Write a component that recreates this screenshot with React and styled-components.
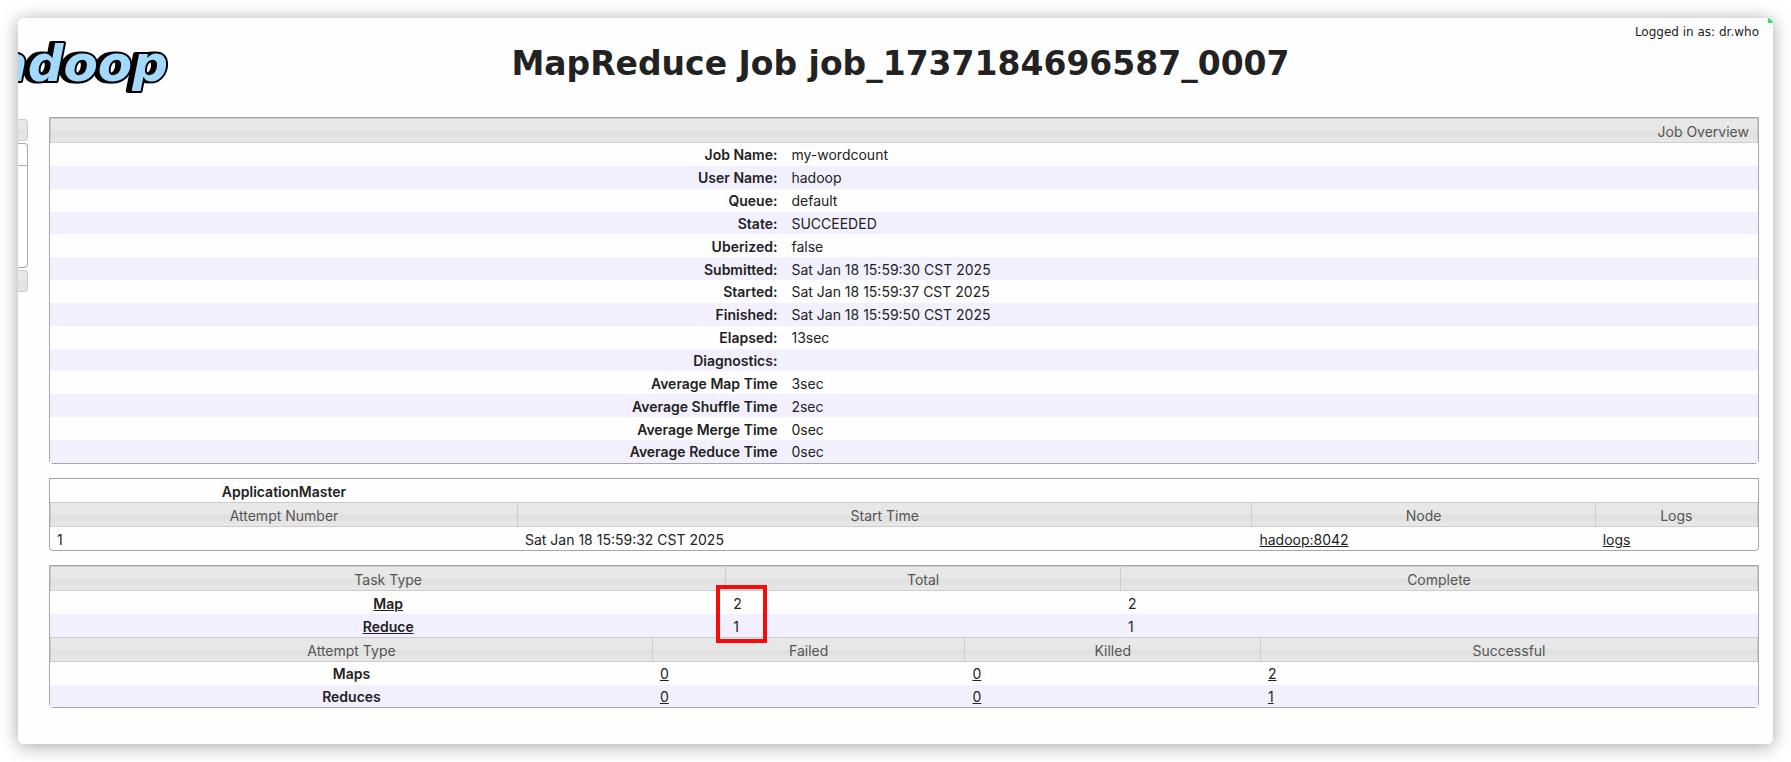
import React from "react";
import styled, { createGlobalStyle, css } from "styled-components";

const GlobalStyle = createGlobalStyle`
  * { box-sizing: border-box; }
  body {
    margin: 0;
    background: #ffffff;
    color: #222222;
    font-family: Inter, "Liberation Sans", sans-serif;
    font-size: 14px;
  }
`;

const barFill = css`
  background: linear-gradient(#e8e8e8 0%, #e7e7e7 50%, #dfdfdf 52%, #e8e8e8 100%);
`;

const Page = styled.div`
  padding: 18px;
`;

const Window = styled.div`
  position: relative;
  overflow: hidden;
  border-radius: 6px;
  background: #fefefe;
  padding: 0 14px 36px 0;
`;

const Shadow = styled.div`
  border-radius: 6px;
  box-shadow: 0 2px 18px rgba(0, 0, 0, 0.36);
`;

const CornerMark = styled.span`
  position: absolute;
  top: 0;
  right: 0;
  width: 5px;
  height: 5px;
  background: #3fdc6c;
`;

const Header = styled.header`
  display: flex;
  align-items: flex-start;
  height: 99px;
`;

const Logo = styled.svg`
  flex: none;
  width: 174px;
  height: 84px;
  margin-top: 8px;
`;

const LogoWord = styled.text`
  font: italic bold 50px "DejaVu Sans", sans-serif;
  text-anchor: end;
  fill: #a4d9fe;
  stroke: #000000;
  stroke-width: 4px;
  stroke-linejoin: round;
  paint-order: stroke;
  filter: drop-shadow(-4px 0 0 #000000);
`;

const Title = styled.h1`
  flex: 1;
  margin: 26px 0 0;
  font: bold 33px/40px "DejaVu Sans", sans-serif;
  text-align: center;
  white-space: nowrap;
`;

const Login = styled.div`
  flex: none;
  width: 150px;
  padding-top: 6px;
  font: 12px/16px "DejaVu Sans", sans-serif;
  text-align: right;
  white-space: nowrap;
`;

const Body = styled.div`
  display: flex;
  gap: 21px;
`;

const Sidebar = styled.nav`
  flex: none;
  display: flex;
  flex-direction: column;
  gap: 2px;
  width: 10px;
  padding-top: 2px;
`;

const NavTab = styled.div`
  height: 22px;
  border: 1px solid #cccccc;
  border-left: 0;
  border-radius: 0 4px 4px 0;
  ${barFill}
`;

const NavPanel = styled.div`
  height: 125px;
  border: 1px solid #aaaaaa;
  border-left: 0;
  border-radius: 0 4px 4px 0;
`;

const NavPanelHead = styled.div`
  height: 22px;
  border-bottom: 1px solid #aaaaaa;
`;

const Main = styled.main`
  flex: 1;
  min-width: 0;
  display: flex;
  flex-direction: column;
  gap: 14px;
`;

const Box = styled.section`
  border: 1px solid #a6a6a6;
  border-radius: 0 0 4px 4px;
`;

const Table = styled.table`
  width: 100%;
  height: ${(p) => p.$height || "auto"};
  table-layout: fixed;
  border-collapse: separate;
  border-spacing: 0;
`;

const Col = styled.col`
  width: ${(p) => p.$width};
`;

const Caption = styled.th`
  height: 23px;
  padding: 2px 7px 0;
  font-weight: 600;
  line-height: 20px;
  text-align: center;
`;

const HeadCell = styled.th`
  height: 25px;
  padding: 2px 8px 0;
  border: 1px solid #cccccc;
  border-left-width: 0;
  ${barFill}
  color: #555555;
  font-weight: 400;
  line-height: 21px;
  text-align: ${(p) => p.$align || "center"};
  &:first-child { border-left-width: 1px; }
`;

const Row = styled.tr`
  height: ${(p) => (p.$fluid ? "auto" : "23px")};
  background: ${(p) => (p.$alt ? "#f2f0fe" : "transparent")};
`;

const Cell = styled.td`
  position: relative;
  padding: 2px 7px 0;
  line-height: 20px;
`;

const Label = styled.th`
  padding: 2px 7px 0;
  font-weight: 600;
  line-height: 20px;
  text-align: ${(p) => p.$align || "center"};
`;

const Link = styled.a`
  color: inherit;
  text-decoration: underline;
`;

const Highlight = styled.span`
  position: absolute;
  z-index: 1;
  top: -6px;
  left: -10px;
  width: 51px;
  height: 58px;
  border: 4px solid #f60a0c;
`;

const overview = [
  ["Job Name:", "my-wordcount"],
  ["User Name:", "hadoop"],
  ["Queue:", "default"],
  ["State:", "SUCCEEDED"],
  ["Uberized:", "false"],
  ["Submitted:", "Sat Jan 18 15:59:30 CST 2025"],
  ["Started:", "Sat Jan 18 15:59:37 CST 2025"],
  ["Finished:", "Sat Jan 18 15:59:50 CST 2025"],
  ["Elapsed:", "13sec"],
  ["Diagnostics:", ""],
  ["Average Map Time", "3sec"],
  ["Average Shuffle Time", "2sec"],
  ["Average Merge Time", "0sec"],
  ["Average Reduce Time", "0sec"],
];

const tasks = [
  ["Map", "2", "2"],
  ["Reduce", "1", "1"],
];

const attempts = [
  ["Maps", "0", "0", "2"],
  ["Reduces", "0", "0", "1"],
];

const Columns = ({ widths }) => (
  <colgroup>
    {widths.map((w, i) => (
      <Col key={i} $width={w} />
    ))}
  </colgroup>
);

const HeadRow = ({ names }) => (
  <tr>
    {names.map((n) => (
      <HeadCell key={n} scope="col">{n}</HeadCell>
    ))}
  </tr>
);

const HadoopLogo = () => (
  <Logo viewBox="0 0 174 84" aria-label="hadoop">
    <LogoWord x="150" y="55">adoop</LogoWord>
  </Logo>
);

export default function App() {
  return (
    <Page>
      <GlobalStyle />
      <Shadow>
        <Window>
          <CornerMark />
          <Header>
            <HadoopLogo />
            <Title>MapReduce Job job_1737184696587_0007</Title>
            <Login>Logged in as: dr.who</Login>
          </Header>
          <Body>
            <Sidebar>
              <NavTab />
              <NavPanel>
                <NavPanelHead />
              </NavPanel>
              <NavTab />
            </Sidebar>
            <Main>
              <Box>
                <Table $height="345px">
                  <Columns widths={["43%", "57%"]} />
                  <thead>
                    <tr>
                      <HeadCell colSpan={2} $align="right">Job Overview</HeadCell>
                    </tr>
                  </thead>
                  <tbody>
                    {overview.map(([label, value], i) => (
                      <Row key={label} $fluid $alt={i % 2 === 1}>
                        <Label scope="row" $align="right">{label}</Label>
                        <Cell>{value}</Cell>
                      </Row>
                    ))}
                  </tbody>
                </Table>
              </Box>
              <Box>
                <Table>
                  <Columns widths={["27.4%", "43%", "20.1%", "9.5%"]} />
                  <thead>
                    <tr>
                      <Caption>ApplicationMaster</Caption>
                    </tr>
                    <HeadRow names={["Attempt Number", "Start Time", "Node", "Logs"]} />
                  </thead>
                  <tbody>
                    <Row>
                      <Cell>1</Cell>
                      <Cell>Sat Jan 18 15:59:32 CST 2025</Cell>
                      <Cell><Link href="#node">hadoop:8042</Link></Cell>
                      <Cell><Link href="#logs">logs</Link></Cell>
                    </Row>
                  </tbody>
                </Table>
              </Box>
              <Box>
                <Table>
                  <Columns widths={["39.6%", "23.1%", "37.3%"]} />
                  <thead>
                    <HeadRow names={["Task Type", "Total", "Complete"]} />
                  </thead>
                  <tbody>
                    {tasks.map(([name, total, complete], i) => (
                      <Row key={name} $alt={i % 2 === 1}>
                        <Label scope="row"><Link href={`#${name}`}>{name}</Link></Label>
                        <Cell>
                          {total}
                          {i === 0 && <Highlight />}
                        </Cell>
                        <Cell>{complete}</Cell>
                      </Row>
                    ))}
                  </tbody>
                </Table>
                <Table $height="70px">
                  <Columns widths={["35.3%", "18.3%", "17.3%", "29.1%"]} />
                  <thead>
                    <HeadRow names={["Attempt Type", "Failed", "Killed", "Successful"]} />
                  </thead>
                  <tbody>
                    {attempts.map(([name, ...counts], i) => (
                      <Row key={name} $fluid $alt={i % 2 === 1}>
                        <Label scope="row">{name}</Label>
                        {counts.map((n, j) => (
                          <Cell key={j}><Link href={`#${name}-${j}`}>{n}</Link></Cell>
                        ))}
                      </Row>
                    ))}
                  </tbody>
                </Table>
              </Box>
            </Main>
          </Body>
        </Window>
      </Shadow>
    </Page>
  );
}
